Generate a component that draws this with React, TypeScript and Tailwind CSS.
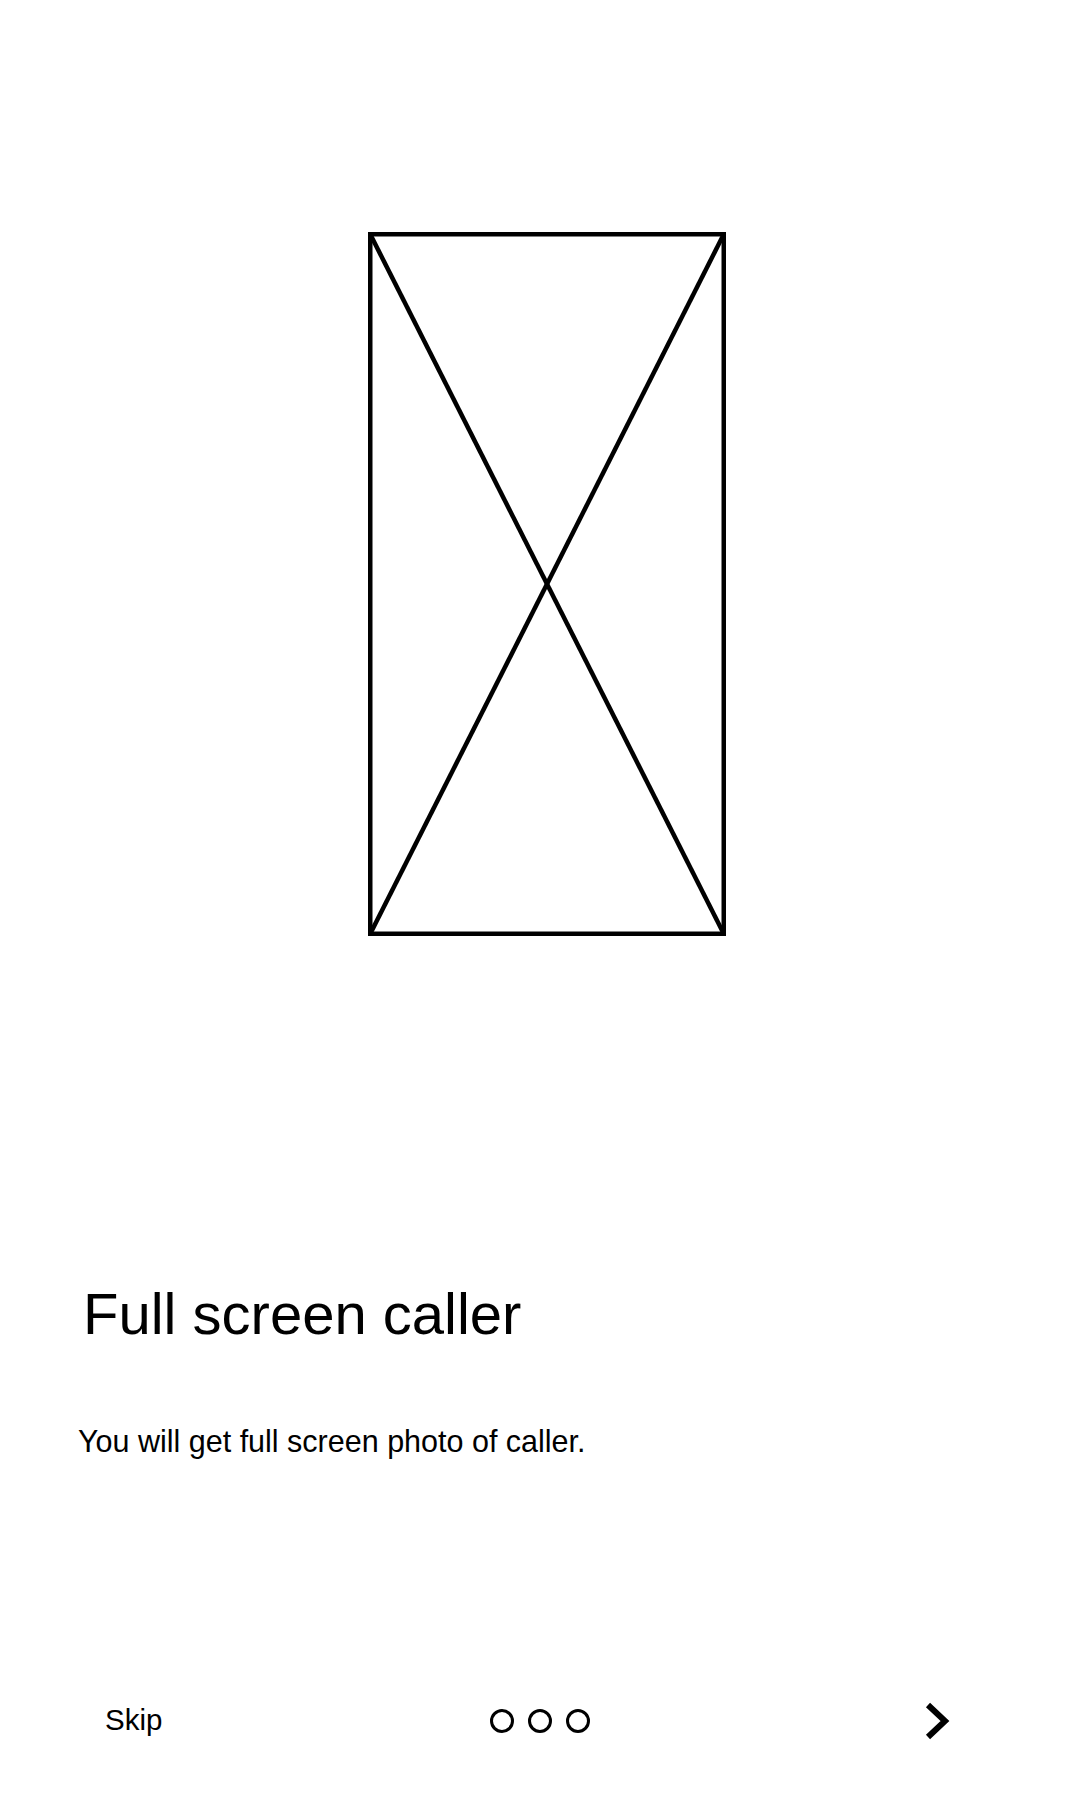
import React from 'react';

function Placeholder() {
  return (
    <svg width="358" height="704" viewBox="0 0 358 704" fill="none" stroke="#000" strokeWidth="4.5">
      <rect x="2.25" y="2.25" width="353.5" height="699.5" />
      <line x1="2.25" y1="2.25" x2="355.75" y2="701.75" />
      <line x1="355.75" y1="2.25" x2="2.25" y2="701.75" />
    </svg>
  );
}

function Dots() {
  return (
    <div className="flex items-center gap-[14px]">
      {[0, 1, 2].map((i) => (
        <span key={i} className="block w-6 h-6 rounded-full border-[3px] border-black" />
      ))}
    </div>
  );
}

export default function App() {
  return (
    <div className="w-[1080px] min-h-[1800px] bg-white text-black flex flex-col font-['Liberation_Sans',Arial,sans-serif]">
      <div className="pt-[232px] pl-[368px]">
        <Placeholder />
      </div>

      <h1 className="mt-[349px] pl-[83px] text-[58px] leading-[58px] font-normal">Full screen caller</h1>

      <p className="mt-[83px] pl-[78px] text-[30.5px] leading-[30px]">You will get full screen photo of caller.</p>

      <div className="mt-[235px] h-[60px] grid grid-cols-3 items-center">
        <div className="pl-[105px]">
          <button className="text-[29.5px] leading-[28px]">Skip</button>
        </div>
        <div className="flex justify-center">
          <Dots />
        </div>
        <div className="flex justify-end pr-[128px]">
          <button aria-label="Next">
            <svg width="30" height="40" viewBox="0 0 30 40" fill="none" stroke="#000" strokeWidth="6">
              <polyline points="6,4 23,20 6,36" />
            </svg>
          </button>
        </div>
      </div>
    </div>
  );
}
